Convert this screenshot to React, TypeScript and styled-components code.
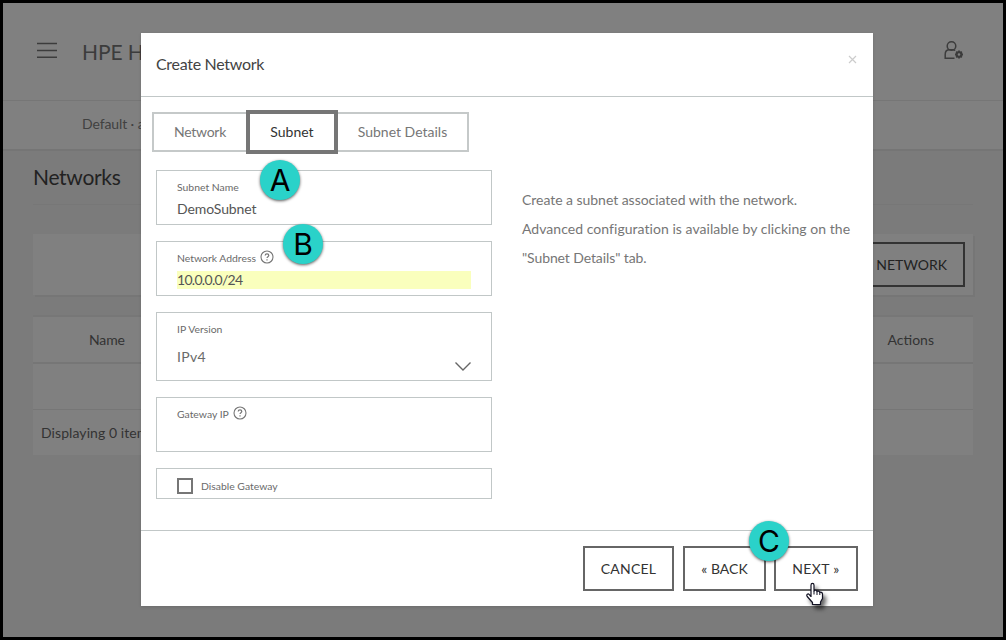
import React from 'react';
import styled, { createGlobalStyle } from 'styled-components';

const Global = createGlobalStyle`
  * { box-sizing: border-box; }
  body { margin: 0; font-family: Lato, "Liberation Sans", sans-serif; }
`;

const Screen = styled.div`
  position: relative;
  width: 1006px;
  height: 640px;
  border: 3px solid #000;
  background: #7b7b7b;
  overflow: hidden;
`;

const Text = styled.span<{ $size: number; $color?: string; $ls?: number }>`
  display: block;
  font-size: ${p => p.$size}px;
  line-height: 20px;
  color: ${p => p.$color ?? '#6a6a6a'};
  letter-spacing: ${p => p.$ls ?? 0}px;
  white-space: nowrap;
`;

const Header = styled.header`
  display: flex;
  align-items: center;
  height: 98px;
  padding: 0 39px 0 34px;
  background: #808080;
  border-bottom: 1px solid #767676;
`;

const HeaderTitle = styled.div`
  flex: 1;
  padding-left: 25px;
`;

const HeaderIcon = styled.svg`
  margin-bottom: 3px;
`;

const SubHeader = styled.div`
  display: flex;
  align-items: center;
  height: 50px;
  padding: 0 0 2px 79px;
  background: #808080;
  border-bottom: 2px solid #757575;
`;

const Page = styled.main`
  padding: 16px 30px 0;
`;

const PageTitle = styled.div`
  height: 38px;
  border-bottom: 1px solid #777;
`;

const ActionBar = styled.div`
  display: flex;
  justify-content: flex-end;
  align-items: center;
  height: 61px;
  margin-top: 29px;
  padding-right: 8px;
  background: #808080;
  box-shadow: 2px 2px 0 #767676;
`;

const Table = styled.div`
  width: 940px;
  margin-top: 20px;
  border-top: 2px solid #777;
  background: #808080;
`;

const TableRow = styled.div<{ $height: number; $line?: number; $pad: number }>`
  display: flex;
  justify-content: space-between;
  align-items: center;
  height: ${p => p.$height}px;
  padding: 0 39px 0 ${p => p.$pad}px;
  border-bottom: ${p => p.$line ?? 0}px solid #767676;
`;

const Button = styled.button<{ $dim?: boolean }>`
  display: flex;
  align-items: center;
  justify-content: ${p => (p.$dim ? 'flex-end' : 'center')};
  width: ${p => (p.$dim ? '110px' : 'auto')};
  height: 45px;
  padding: ${p => (p.$dim ? '0 16px 0 0' : '0')};
  border: 2px solid ${p => (p.$dim ? '#333' : '#666')};
  background: transparent;
  font-family: inherit;
`;

const Dialog = styled.section`
  position: absolute;
  left: 138px;
  top: 30px;
  width: 732px;
  height: 573px;
  display: flex;
  flex-direction: column;
  background: #fff;
  box-shadow: 0 1px 3px rgba(0, 0, 0, 0.12);
`;

const DialogHeader = styled.div`
  display: flex;
  justify-content: space-between;
  align-items: flex-start;
  height: 64px;
  padding: 21px 16px 0 15px;
  border-bottom: 1px solid #c1c7c7;
`;

const CloseIcon = styled.svg`
  margin-top: 1px;
`;

const DialogBody = styled.div`
  height: 433px;
  padding: 13px 15px 0 11px;
`;

const Tabs = styled.div`
  display: flex;
  align-items: center;
  height: 44px;
`;

const Tab = styled.div<{ $width: number; $active?: boolean; $side?: 'left' | 'right' }>`
  display: flex;
  align-items: center;
  justify-content: center;
  width: ${p => p.$width}px;
  height: ${p => (p.$active ? 44 : 40)}px;
  border: ${p => (p.$active ? '4px solid #767676' : '2px solid #c5c9c9')};
  ${p => p.$side === 'left' && 'border-right: 0;'}
  ${p => p.$side === 'right' && 'border-left: 0;'}
`;

const Columns = styled.div`
  display: flex;
  gap: 30px;
  padding: 16px 0 0 4px;
`;

const Form = styled.div`
  display: flex;
  flex-direction: column;
  gap: 16px;
  width: 336px;
`;

const Field = styled.div<{ $height: number }>`
  height: ${p => p.$height}px;
  padding: 6px 20px 0;
  border: 1px solid #c1c7c7;
`;

const LabelRow = styled.div`
  display: flex;
  gap: 4px;
  height: 20px;
`;

const LabelIcon = styled.svg`
  margin-top: 2px;
`;

const Value = styled.div<{ $filled?: boolean }>`
  display: flex;
  align-items: center;
  height: 18px;
  margin-top: 3px;
  background: ${p => (p.$filled ? '#faffbd' : 'transparent')};
`;

const SelectRow = styled.div`
  display: flex;
  justify-content: space-between;
  align-items: flex-start;
  padding: 8px 0 0;
`;

const Chevron = styled.svg`
  margin-top: 15px;
`;

const CheckField = styled.label`
  display: flex;
  align-items: flex-start;
  gap: 8px;
  height: 31px;
  padding: 9px 20px 0;
  border: 1px solid #c1c7c7;
`;

const CheckBox = styled.span`
  width: 16px;
  height: 16px;
  border: 2px solid #767676;
`;

const CheckText = styled.div`
  height: 16px;
  margin-top: -2px;
`;

const Help = styled.div`
  padding-top: 15px;
`;

const HelpLine = styled.div`
  height: 29px;
  padding-top: 5px;
`;

const DialogFooter = styled.div`
  display: flex;
  justify-content: flex-end;
  height: 76px;
  padding: 15px 15px 0 0;
  border-top: 1px solid #c1c7c7;
`;

const FooterButtons = styled.div`
  display: grid;
  grid-template-columns: 91px 9px 83px 8px 84px;
  align-items: start;

  & > :nth-child(2) { grid-column: 3; }
  & > :nth-child(3) { grid-column: 5; }
`;

const Badge = styled.div<{ $x: number; $y: number }>`
  position: absolute;
  left: ${p => p.$x}px;
  top: ${p => p.$y}px;
  display: flex;
  align-items: center;
  justify-content: center;
  width: 40px;
  height: 40px;
  border-radius: 50%;
  background: #2ad2c9;
  box-shadow: 0 1px 3px rgba(0, 0, 0, 0.65);
  font-family: Inter, sans-serif;
  font-size: 30px;
  line-height: 38px;
  padding-bottom: 1px;
  color: #000;
`;

const Pointer = styled.svg`
  position: absolute;
  left: 802px;
  top: 579px;
  filter: drop-shadow(3px 4px 2px rgba(0, 0, 0, 0.6));
`;

const HelpIcon = () => (
  <LabelIcon width="14" height="14" viewBox="0 0 14 14" fill="none" stroke="#767676">
    <circle cx="7" cy="7" r="6" strokeWidth="1.100" />
    <path d="M5.200 5.500C5.200 4.400 6 3.900 7 3.900s1.800.6 1.800 1.600C8.800 6.700 7 6.700 7 8.100M7 9.200v1.200" strokeWidth="1.200" />
  </LabelIcon>
);

const MenuIcon = () => (
  <HeaderIcon width="20" height="16" viewBox="0 0 20 16" stroke="#3c3c3c" strokeWidth="1.600">
    <path d="M0 1.500h20M0 8.500h20M0 15.200h20" />
  </HeaderIcon>
);

const UserIcon = () => (
  <HeaderIcon width="20" height="20" viewBox="0 0 20 20" fill="none" stroke="#3c3c3c" strokeWidth="1.500">
    <circle cx="7.500" cy="6" r="4.300" />
    <path d="M10.500 18.200H1.200V14.500C1.200 11.500 3 9.800 5.500 9.800H9C10 9.800 10.600 10 11.200 10.500" />
    <circle cx="15" cy="14.500" r="2.300" strokeWidth="2" />
    <path d="M15 10.500v2M15 16.500v2M11 14.500h2M17 14.500h2M12.200 11.700l1.300 1.300M16.500 16l1.300 1.300M17.800 11.700L16.500 13M13.500 16l-1.300 1.300" strokeWidth="1.800" />
  </HeaderIcon>
);

export default function App() {
  return (
    <>
      <Global />
      <Screen>
        <Header>
          <MenuIcon />
          <HeaderTitle><Text $size={21} $color="#3c3c3c" $ls={-0.1}>HPE H</Text></HeaderTitle>
          <UserIcon />
        </Header>
        <SubHeader><Text $size={14} $color="#414141" $ls={-0.1}>Default · a</Text></SubHeader>
        <Page>
          <PageTitle><Text $size={21} $color="#222" $ls={-0.3}>Networks</Text></PageTitle>
          <ActionBar>
            <Button $dim><Text $size={14} $color="#222">NETWORK</Text></Button>
          </ActionBar>
          <Table>
            <TableRow $height={47} $line={2} $pad={56}>
              <Text $size={14} $color="#333" $ls={-0.15}>Name</Text>
              <Text $size={14} $color="#333">Actions</Text>
            </TableRow>
            <TableRow $height={46} $line={1} $pad={56} />
            <TableRow $height={45} $pad={8}><Text $size={14} $color="#333" $ls={0.08}>Displaying 0 item</Text></TableRow>
          </Table>
        </Page>
        <Dialog>
          <DialogHeader>
            <Text $size={16} $color="#434343" $ls={-0.3}>Create Network</Text>
            <CloseIcon width="9" height="9" viewBox="0 0 9 9" stroke="#ccc" strokeWidth="1.200"><path d="M1 1l7 7M8 1L1 8" /></CloseIcon>
          </DialogHeader>
          <DialogBody>
            <Tabs>
              <Tab $width={94} $side="left"><Text $size={14} $color="#767676" $ls={-0.25}>Network</Text></Tab>
              <Tab $width={92} $active><Text $size={14} $color="#333">Subnet</Text></Tab>
              <Tab $width={131} $side="right"><Text $size={14} $color="#767676">Subnet Details</Text></Tab>
            </Tabs>
            <Columns>
              <Form>
                <Field $height={55}>
                  <LabelRow><Text $size={10.4}>Subnet Name</Text></LabelRow>
                  <Value><Text $size={14} $color="#555" $ls={-0.1}>DemoSubnet</Text></Value>
                </Field>
                <Field $height={55}>
                  <LabelRow><Text $size={10.4}>Network Address</Text><HelpIcon /></LabelRow>
                  <Value $filled><Text $size={14} $color="#555" $ls={-0.7}>10.0.0.0/24</Text></Value>
                </Field>
                <Field $height={69}>
                  <LabelRow><Text $size={10.4}>IP Version</Text></LabelRow>
                  <SelectRow>
                    <Text $size={14} $ls={0.3}>IPv4</Text>
                    <Chevron width="16" height="9" viewBox="0 0 16 9" fill="none" stroke="#666" strokeWidth="1.400"><path d="M.5.500L8 8 15.500.500" /></Chevron>
                  </SelectRow>
                </Field>
                <Field $height={55}>
                  <LabelRow><Text $size={10.4}>Gateway IP</Text><HelpIcon /></LabelRow>
                </Field>
                <CheckField>
                  <CheckBox />
                  <CheckText><Text $size={10.4}>Disable Gateway</Text></CheckText>
                </CheckField>
              </Form>
              <Help>
                <HelpLine><Text $size={14} $color="#767676" $ls={-0.04}>Create a subnet associated with the network.</Text></HelpLine>
                <HelpLine><Text $size={14} $color="#767676" $ls={0.04}>Advanced configuration is available by clicking on the</Text></HelpLine>
                <HelpLine><Text $size={14} $color="#767676" $ls={-0.1}>"Subnet Details" tab.</Text></HelpLine>
              </Help>
            </Columns>
          </DialogBody>
          <DialogFooter>
            <FooterButtons>
              <Button><Text $size={14} $color="#333" $ls={0.2}>CANCEL</Text></Button>
              <Button><Text $size={14} $color="#333">« BACK</Text></Button>
              <Button><Text $size={14} $color="#333" $ls={0.35}>NEXT »</Text></Button>
            </FooterButtons>
          </DialogFooter>
        </Dialog>
        <Badge $x={257} $y={157}>A</Badge>
        <Badge $x={280} $y={221}>B</Badge>
        <Badge $x={746} $y={518}>C</Badge>
        <Pointer width="20" height="24" viewBox="0 0 20 24">
          <path d="M6 15V3.200C6 .8 9 .8 9 3.200V9C9.300 7.800 11.800 8 12 9.600C12.500 8.600 14.600 9 14.800 10.500C15.400 9.800 17.500 10.300 17.500 12V16.500L15.500 20V22.500H7.500V20.500L2.200 14.500C1 12.500 3 11.200 4.300 12.600L6 14.500" fill="#fff" stroke="#112" strokeWidth="1.200" strokeLinejoin="round" />
          <path d="M9 9v3.500M12 9.600V13M14.800 10.500V13" stroke="#112" fill="none" />
        </Pointer>
      </Screen>
    </>
  );
}
